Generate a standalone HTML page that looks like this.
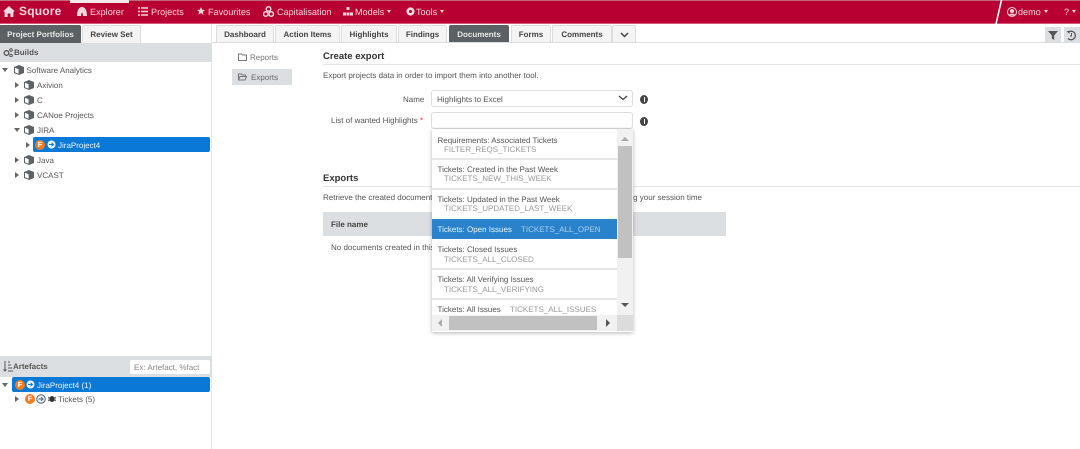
<!DOCTYPE html>
<html><head><meta charset="utf-8"><style>
html,body{margin:0;padding:0;background:#fff}
#p{position:relative;width:1080px;height:449px;overflow:hidden;background:#fff;font-family:"Liberation Sans",sans-serif;font-size:8px;color:#555;filter:blur(.3px);text-rendering:geometricPrecision}
#p div,#p svg{position:absolute}
.t{white-space:nowrap;line-height:14px}
.n{color:#f3d5dc;font-size:9.1px;top:6px;line-height:12px}
.tab{top:25px;height:18px;background:#f4f4f4;border:1px solid #ddd;border-bottom:0;border-radius:2px 2px 0 0;box-sizing:border-box;text-align:center;font-weight:bold;color:#444;line-height:17px;font-size:8px}
.tab.a{background:#5a6063;color:#e8e8e8;border-color:#5a6063}
.g{color:#999}
.r{height:1px;background:#e6e6e6}
.arr{width:0;height:0;border-top:3px solid transparent;border-bottom:3px solid transparent;border-left:4px solid #666}
.dn{width:0;height:0;border-left:3.5px solid transparent;border-right:3.5px solid transparent;border-top:4px solid #666}
.wd{width:0;height:0;border-left:2.5px solid transparent;border-right:2.5px solid transparent;border-top:3px solid #f3d5dc}
.f{width:10px;height:10px;border-radius:50%;background:#ef7d22;color:#fff;font-weight:bold;font-size:7.5px;line-height:10px;text-align:center}
</style></head><body><div id="p">

<div style="left:0;top:0;width:1080px;height:24px;background:#b80032;border-top:1px solid #c06a80;border-bottom:1px solid #d8557c;box-sizing:border-box"></div>
<div style="left:70px;top:0;width:59px;height:3px;background:#f4e8ea"></div>
<svg style="left:992px;top:0" width="12" height="24"><path d="M9.5 0L4 24" stroke="#fff" stroke-width="1.6"/></svg>

<svg style="left:3px;top:6px" width="12" height="11" viewBox="0 0 12 11"><path d="M6 0L0 5.5h1.6V11h3V7.5h2.8V11h3V5.5H12z" fill="#f6dce3"/></svg>
<div class="t" style="left:19px;top:5px;color:#f3d5dc;font-weight:bold;font-size:12px;letter-spacing:.2px;line-height:12px">Squore</div>
<svg style="left:77px;top:7px" width="10" height="9" viewBox="0 0 10 9"><path d="M0 9C0 3 2 0 5 0s5 3 5 9H6L5.500 6h-1L4 9z" fill="#f3d5dc"/></svg>
<div class="t n" style="left:90px">Explorer</div>
<svg style="left:138px;top:7px" width="10" height="9"><path d="M0 1h2M3 1h7M0 4.500h2M3 4.500h7M0 8h2M3 8h7" stroke="#f3d5dc" stroke-width="1.600"/></svg>
<div class="t n" style="left:151px">Projects</div>
<svg style="left:197px;top:7px" width="8" height="8" viewBox="0 0 10 10"><path d="M5 0l1.500 3.400 3.500.3-2.700 2.300.9 3.600L5 7.700 1.800 9.600l.9-3.600L0 3.700l3.500-.3z" fill="#f3d5dc"/></svg>
<div class="t n" style="left:208px">Favourites</div>
<svg style="left:263px;top:6px" width="11" height="11"><circle cx="5.500" cy="3" r="2.300" fill="none" stroke="#f3d5dc" stroke-width="1.500"/><circle cx="2.800" cy="8" r="2.300" fill="none" stroke="#f3d5dc" stroke-width="1.500"/><circle cx="8.200" cy="8" r="2.300" fill="none" stroke="#f3d5dc" stroke-width="1.500"/></svg>
<div class="t n" style="left:277px">Capitalisation</div>
<svg style="left:343px;top:7px" width="10" height="9"><path d="M3.500 0h3v3h-3zM0 5.500h3v3H0zM3.500 5.500h3v3h-3zM7 5.500h3v3H7z" fill="#f3d5dc"/></svg>
<div class="t n" style="left:355px">Models</div>
<div class="wd" style="left:387px;top:10px"></div>
<svg style="left:406px;top:7px" width="9" height="9"><circle cx="4.500" cy="4.500" r="2.800" fill="none" stroke="#f3d5dc" stroke-width="2.600"/></svg>
<div class="t n" style="left:416px">Tools</div>
<div class="wd" style="left:440px;top:10px"></div>
<svg style="left:1007px;top:7px" width="10" height="10"><circle cx="5" cy="5" r="4.500" fill="none" stroke="#f3d5dc"/><circle cx="5" cy="4" r="2" fill="#f3d5dc"/><path d="M1.500 8.500C2 6 8 6 8.500 8.500z" fill="#f3d5dc"/></svg>
<div class="t n" style="left:1018px">demo</div>
<div class="wd" style="left:1044px;top:10px"></div>
<div class="t n" style="left:1064px">?</div>
<div class="wd" style="left:1072px;top:10px"></div>

<!-- left tabs -->
<div class="tab a" style="left:0;width:81px;border-radius:0 2px 0 0">Project Portfolios</div>
<div class="tab" style="left:82px;width:59px">Review Set</div>
<div style="left:211px;top:24px;width:1px;height:425px;background:#e6e6e6"></div>
<div style="left:0;top:43px;width:212px;height:19px;background:#dcdfe1"></div>
<svg style="left:3px;top:48px" width="10" height="9"><circle cx="3.500" cy="5" r="2.300" fill="none" stroke="#555" stroke-width="1.300"/><circle cx="8" cy="2" r="1.300" fill="none" stroke="#555"/><circle cx="8" cy="7.500" r="1.300" fill="none" stroke="#555"/></svg>
<div class="t" style="left:14px;top:46px;font-weight:bold;color:#555">Builds</div>

<!-- tree -->
<div class="dn" style="left:2px;top:68px"></div>
<div class="t" style="left:26.500px;top:64px">Software Analytics</div>
<div class="arr" style="left:15px;top:82px"></div>
<div class="t" style="left:37px;top:79px">Axivion</div>
<div class="arr" style="left:15px;top:97px"></div>
<div class="t" style="left:37px;top:94px">C</div>
<div class="arr" style="left:15px;top:112px"></div>
<div class="t" style="left:37px;top:109px">CANoe Projects</div>
<div class="dn" style="left:14px;top:128px"></div>
<div class="t" style="left:37px;top:124px">JIRA</div>
<div class="arr" style="left:26px;top:142px"></div>
<div style="left:33px;top:137px;width:177px;height:15px;background:#0a78d6;border-radius:2px"></div>
<div class="f" style="left:35px;top:140px">F</div>
<svg style="left:47px;top:140px" width="9" height="9"><circle cx="4.500" cy="4.500" r="4" fill="#f0f6fb"/><path d="M2 4.500h4M4.500 2.800l2 1.700-2 1.700" stroke="#0a78d6" fill="none"/></svg>
<div class="t" style="left:58px;top:139px;color:#f0f6fb">JiraProject4</div>
<div class="arr" style="left:15px;top:157px"></div>
<div class="t" style="left:37px;top:154px">Java</div>
<div class="arr" style="left:15px;top:172px"></div>
<div class="t" style="left:37px;top:169px">VCAST</div>
<svg style="left:0;top:0" width="60" height="185">
<defs><g id="c"><path d="M5 0L10 2v6L5 10 0 8V2z" fill="#5c6266"/><path d="M1 2.800L4.600 4.300V8.700L1 7.200z" fill="#fff"/></g></defs>
<use href="#c" x="14" y="65"/><use href="#c" x="24" y="80"/><use href="#c" x="24" y="95"/><use href="#c" x="24" y="110"/><use href="#c" x="24" y="125"/><use href="#c" x="24" y="155"/><use href="#c" x="24" y="170"/>
</svg>

<!-- artefacts -->
<div style="left:0;top:356px;width:212px;height:21px;background:#dcdfe1"></div>
<svg style="left:3px;top:361px" width="10" height="11"><path d="M2 0v10M0.500 8.500L2 10l1.500-1.500M5 1h2M5 4h3M5 7h4M5 10h5" stroke="#555" fill="none"/></svg>
<div class="t" style="left:13px;top:360px;font-weight:bold;color:#555">Artefacts</div>
<div class="t" style="left:130px;top:360px;width:80px;height:14px;background:#fff;border-radius:2px;color:#888;line-height:15px;text-indent:4px">Ex: Artefact, %fact</div>
<div class="dn" style="left:2px;top:383px"></div>
<div style="left:12px;top:377px;width:198px;height:15px;background:#0a78d6;border-radius:2px"></div>
<div class="f" style="left:15px;top:380px">F</div>
<svg style="left:26px;top:380px" width="9" height="9"><circle cx="4.500" cy="4.500" r="4" fill="#f0f6fb"/><path d="M2 4.500h4M4.500 2.800l2 1.700-2 1.700" stroke="#0a78d6" fill="none"/></svg>
<div class="t" style="left:37px;top:379px;color:#f0f6fb">JiraProject4 (1)</div>
<div class="arr" style="left:15px;top:396px"></div>
<div class="f" style="left:25px;top:394px">F</div>
<svg style="left:36px;top:394px" width="10" height="10"><circle cx="5" cy="5" r="4.300" fill="#e8eef4" stroke="#567"/><path d="M2.500 5h4.500M5 3.300l2 1.700-2 1.700" stroke="#567" fill="none"/></svg>
<svg style="left:48px;top:394px" width="8" height="9"><ellipse cx="4" cy="5" rx="2.500" ry="3" fill="#333"/><path d="M0 3l8 4M8 3L0 7M0 5h8" stroke="#333" stroke-width=".7"/></svg>
<div class="t" style="left:58px;top:393px">Tickets (5)</div>

<!-- right tabs -->
<div class="tab" style="left:216px;width:58px">Dashboard</div>
<div class="tab" style="left:275px;width:65px">Action Items</div>
<div class="tab" style="left:341px;width:56px">Highlights</div>
<div class="tab" style="left:398px;width:49px">Findings</div>
<div class="tab a" style="left:449px;width:60px">Documents</div>
<div class="tab" style="left:511px;width:40px">Forms</div>
<div class="tab" style="left:552px;width:60px">Comments</div>
<div class="tab" style="left:612px;width:24px"></div>
<svg style="left:620px;top:32px" width="9" height="6"><path d="M1 1l3.500 3.500L8 1" fill="none" stroke="#444" stroke-width="1.500"/></svg>
<div style="left:212px;top:42px;width:868px;height:1px;background:#ddd"></div>
<div style="left:1045px;top:27px;width:16px;height:16px;background:#dcdfe1"></div>
<svg style="left:1048px;top:31px" width="10" height="9"><path d="M0 0h10L6.200 4.500V9L3.800 7.500v-3z" fill="#555"/></svg>
<div style="left:1064px;top:27px;width:16px;height:16px;background:#dcdfe1"></div>
<svg style="left:1066px;top:30px" width="11" height="11"><path d="M2 2.500A4.300 4.300 0 1 1 2 8.500" fill="none" stroke="#555" stroke-width="1.300"/><path d="M0.500 1h3v3z" fill="#555"/><path d="M5.500 3v3H4" fill="none" stroke="#555"/></svg>

<!-- side menu -->
<svg style="left:238px;top:53px" width="9" height="8"><path d="M.5 1h3l1 1h4v5.500h-8z" fill="none" stroke="#777"/></svg>
<div class="t" style="left:250px;top:51px;color:#777">Reports</div>
<div style="left:232px;top:69px;width:60px;height:16px;background:#dcdfe1"></div>
<svg style="left:238px;top:73px" width="9" height="8"><path d="M.5 7V1h3l1 1h3v1.500M.5 7l1.500-3.500h6.500L7 7z" fill="none" stroke="#777"/></svg>
<div class="t" style="left:251px;top:71px;color:#666">Exports</div>

<!-- create export -->
<div class="t" style="left:323px;top:50px;font-weight:bold;color:#333;font-size:9.500px">Create export</div>
<div class="r" style="left:323px;top:64px;width:757px"></div>
<div class="t" style="left:323px;top:69px">Export projects data in order to import them into another tool.</div>
<div class="t" style="left:403px;top:93px">Name</div>
<div style="left:431px;top:90px;width:202px;height:17px;border:1px solid #ddd;border-radius:3px;box-sizing:border-box"></div>
<div class="t" style="left:437px;top:93px">Highlights to Excel</div>
<svg style="left:618px;top:95px" width="10" height="6"><path d="M1 1l4 3.500L9 1" fill="none" stroke="#444" stroke-width="1.300"/></svg>
<div style="left:640px;top:95px;width:8px;height:9px;border-radius:50%;background:#444"></div>
<div style="left:643.500px;top:97px;width:1.500px;height:5px;background:#fff"></div>
<div class="t" style="left:331px;top:114px">List of wanted Highlights <span style="color:#d33">*</span></div>
<div style="left:431px;top:112px;width:202px;height:17px;border:1px solid #ddd;border-radius:3px;box-sizing:border-box"></div>
<div style="left:640px;top:117px;width:8px;height:9px;border-radius:50%;background:#444"></div>
<div style="left:643.500px;top:119px;width:1.500px;height:5px;background:#fff"></div>

<!-- exports -->
<div class="t" style="left:323px;top:172px;font-weight:bold;color:#333;font-size:9.500px">Exports</div>
<div class="r" style="left:323px;top:186px;width:757px"></div>
<div class="t" style="left:323px;top:191px">Retrieve the created documents</div>
<div class="t" style="right:378px;top:191px">during your session time</div>
<div style="left:323px;top:212px;width:403px;height:24px;background:#dcdfe1"></div>
<div class="t" style="left:331px;top:218px;font-weight:bold;color:#444">File name</div>
<div class="t" style="left:331px;top:241px">No documents created in this</div>

<!-- dropdown -->
<div style="left:432px;top:129px;width:201px;height:203px;background:#fff;box-shadow:0 1px 4px rgba(0,0,0,.3);overflow:hidden"></div>
<div class="t" style="left:437.500px;top:134px">Requirements: Associated Tickets</div>
<div class="t g" style="left:444px;top:143px">FILTER_REQS_TICKETS</div>
<div class="r" style="left:432px;top:158px;width:185px;height:1.500px"></div>
<div class="t" style="left:437.500px;top:163px">Tickets: Created in the Past Week</div>
<div class="t g" style="left:444px;top:172px">TICKETS_NEW_THIS_WEEK</div>
<div class="r" style="left:432px;top:188px;width:185px;height:1.500px"></div>
<div class="t" style="left:437.500px;top:193px">Tickets: Updated in the Past Week</div>
<div class="t g" style="left:444px;top:202px">TICKETS_UPDATED_LAST_WEEK</div>
<div style="left:432px;top:219px;width:185px;height:20px;background:#2a82cc"></div>
<div class="t" style="left:437.500px;top:223px;color:#eaf3fa">Tickets: Open Issues</div>
<div class="t" style="left:521px;top:223px;color:#a9d0ee">TICKETS_ALL_OPEN</div>
<div class="t" style="left:437.500px;top:243px">Tickets: Closed Issues</div>
<div class="t g" style="left:444px;top:253px">TICKETS_ALL_CLOSED</div>
<div class="r" style="left:432px;top:268px;width:185px;height:1.500px"></div>
<div class="t" style="left:437.500px;top:273px">Tickets: All Verifying Issues</div>
<div class="t g" style="left:444px;top:283px">TICKETS_ALL_VERIFYING</div>
<div class="r" style="left:432px;top:298px;width:185px;height:1.500px"></div>
<div class="t" style="left:437.500px;top:303px">Tickets: All Issues</div>
<div class="t g" style="left:510px;top:303px">TICKETS_ALL_ISSUES</div>
<!-- vertical scrollbar -->
<div style="left:617px;top:129px;width:16px;height:187px;background:#f1f1f1"></div>
<div style="left:618px;top:146px;width:14px;height:112px;background:#c1c1c1"></div>
<div style="left:621px;top:137px;width:0;height:0;border-left:4px solid transparent;border-right:4px solid transparent;border-bottom:4px solid #aaa"></div>
<div style="left:621px;top:303px;width:0;height:0;border-left:4px solid transparent;border-right:4px solid transparent;border-top:4px solid #555"></div>
<!-- horizontal scrollbar -->
<div style="left:432px;top:315px;width:201px;height:16px;background:#f1f1f1"></div>
<div style="left:449px;top:316px;width:148px;height:14px;background:#c1c1c1"></div>
<div style="left:617px;top:315px;width:16px;height:16px;background:#dcdcdc"></div>
<div style="left:438px;top:319px;width:0;height:0;border-top:4px solid transparent;border-bottom:4px solid transparent;border-right:4px solid #aaa"></div>
<div style="left:606px;top:319px;width:0;height:0;border-top:4px solid transparent;border-bottom:4px solid transparent;border-left:4px solid #555"></div>

</div></body></html>
